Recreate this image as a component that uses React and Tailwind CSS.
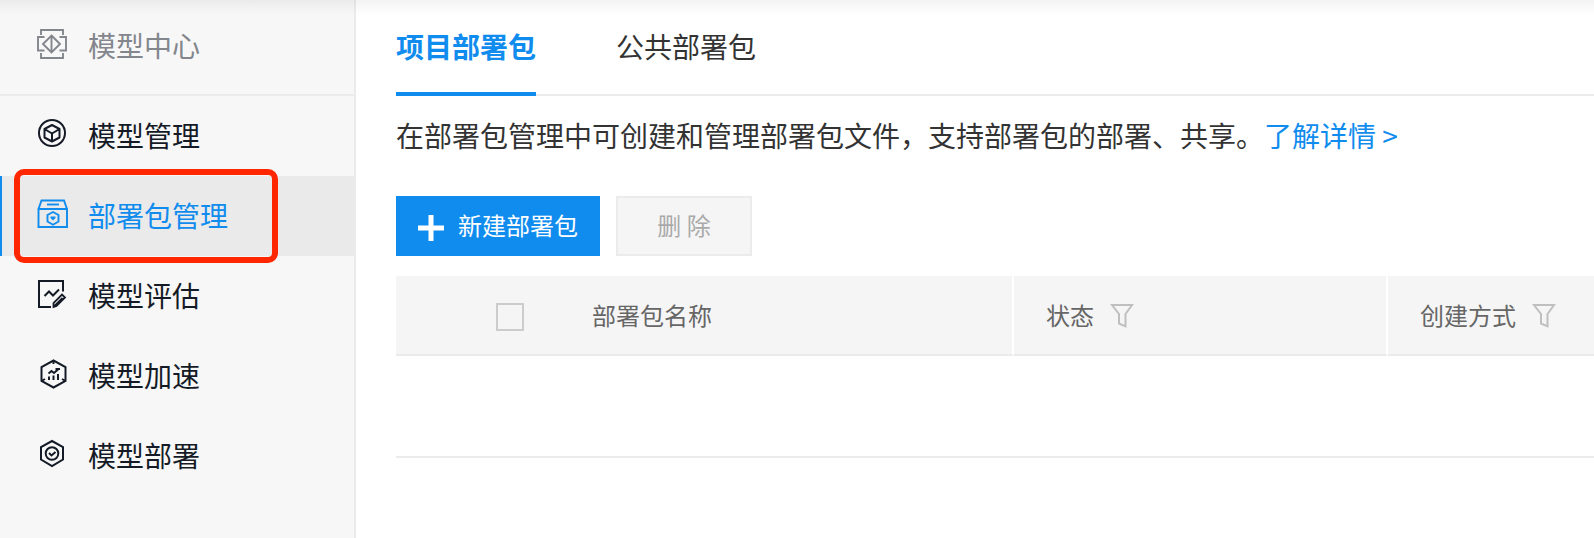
import { useState } from 'react';
import { clsx } from 'clsx';

const Icon = ({ children }) => (
    <svg
        className="w-8 h-8 mb-1 shrink-0"
        viewBox="0 0 32 32"
        fill="none"
        stroke="currentColor"
        strokeWidth="2"
        aria-hidden="true"
    >
        {children}
    </svg>
);

const CenterIcon = () => (
    <Icon>
        <g strokeWidth="1.9">
            <path d="M5 8V3h22v5M5 26v5h22v-5" />
            <path d="M8.500 10H2v13.500h6.500M23.500 10H30v13.500h-6.500" />
            <path d="M15.500 8.500l8.500 8.500-8.500 8.500L7 17zM15.500 8.500v17" />
        </g>
    </Icon>
);

const ManageIcon = () => (
    <Icon>
        <circle cx="16" cy="16" r="13" />
        <path d="M16 8l7.500 4v8.500L16 24.500l-7.500-4V12zM8.500 12l7.500 4.500 7.500-4.500M16 16.500v8" strokeLinejoin="round" />
    </Icon>
);

const PackageIcon = () => (
    <Icon>
        <g strokeWidth="1.9">
            <path d="M2.500 12h28.500v18H2.500zM2.500 12l3-8.500h22.500l3 8.500" />
            <path d="M11 7.500h12" />
            <path d="M17 15l5.500 3v6.500L17 27.700l-5.500-3.200V18z" />
        </g>
        <path d="M14.500 19.500h5v1.500L17 23.500l-2.500-2.500z" fill="currentColor" stroke="none" />
    </Icon>
);

const EvaluateIcon = () => (
    <Icon>
        <path d="M27 14.500V4H3v26h12" />
        <path d="M8.500 19l4.500-4.500 4 4 6-6" />
        <path d="M17.500 30v-4l8.500-8.500 3 3-8.500 8.500zM18.500 29l8-8" strokeWidth="1.800" />
    </Icon>
);

const SpeedIcon = () => (
    <Icon>
        <path d="M17.500 3.500l12 6.500v14l-12 6.500-12-6.500V10z" strokeWidth="2" />
        <path d="M17.500 3v4M5.500 24l3.500-2M29.500 24l-3.500-2" />
        <path d="M12.500 16.500l3-2.500 2.500 2 4.500-4M19.500 12H24" />
        <path d="M13 19.500v3.500M17.500 18.500v4.500M22 17v6" />
    </Icon>
);

const DeployIcon = () => (
    <Icon>
        <path d="M16 4l11 6v12.500l-11 6.500-11-6.500V10z" />
        <circle cx="16" cy="16.500" r="6.300" />
        <path d="M13 16l2.500 2.500 4-3.500" />
    </Icon>
);

const FilterIcon = () => (
    <svg className="w-6 h-6 mt-0.5" viewBox="0 0 24 24" fill="none" stroke="currentColor" strokeWidth="2" aria-hidden="true">
        <path d="M2 1h20l-6.500 9v12.300L9 19.500V10z" />
    </svg>
);

const navItems = [
    { id: 'manage', label: '模型管理', icon: <ManageIcon /> },
    { id: 'package', label: '部署包管理', icon: <PackageIcon />, marked: true },
    { id: 'evaluate', label: '模型评估', icon: <EvaluateIcon /> },
    { id: 'speed', label: '模型加速', icon: <SpeedIcon /> },
    { id: 'deploy', label: '模型部署', icon: <DeployIcon /> },
];

const tabs = [
    { id: 'project', label: '项目部署包' },
    { id: 'public', label: '公共部署包' },
];

const Sidebar = () => {
    const [current, setCurrent] = useState('package');

    return (
        <aside className="w-[356px] shrink-0 bg-[#f7f7f7] border-r-2 border-[#ebebeb]">
            <div className="h-24 pl-9 pb-1 flex items-center gap-5 text-[#83868c] border-b-2 border-[#ebebeb]">
                <CenterIcon />
                <span>模型中心</span>
            </div>
            <nav>
                {navItems.map((item) => (
                    <div key={item.id} className="relative">
                        <button
                            onClick={() => setCurrent(item.id)}
                            className={clsx(
                                'w-full h-20 pl-[34px] pb-0.5 flex items-center gap-5 text-left border-l-2',
                                current === item.id
                                    ? 'bg-[#eaeaea] text-[#108cee] border-[#108cee]'
                                    : 'text-[#151b26] border-transparent'
                            )}
                        >
                            {item.icon}
                            <span>{item.label}</span>
                        </button>
                        {item.marked && (
                            <div className="absolute left-3.5 -top-[7px] w-[264px] h-[94px] rounded-[10px] border-6 border-[#ff2600] pointer-events-none" />
                        )}
                    </div>
                ))}
            </nav>
        </aside>
    );
};

const PackageTable = () => (
    <table className="w-full mt-5 table-fixed border-separate border-spacing-0 text-2xl text-[#666] text-left">
        <thead>
            <tr className="h-20 bg-[#f5f5f5]">
                <th className="w-[164px] pl-[100px] border-b-2 border-[#ebebeb]">
                    <input
                        type="checkbox"
                        aria-label="全选"
                        className="block mt-1 appearance-none w-7 h-7 border-2 border-[#ccc] checked:bg-[#108cee]"
                    />
                </th>
                <th className="w-[454px] pl-8 font-normal border-b-2 border-r-2 border-b-[#ebebeb] border-r-white">
                    部署包名称
                </th>
                <th className="w-[374px] pl-8 font-normal border-b-2 border-r-2 border-b-[#ebebeb] border-r-white">
                    <div className="flex items-center gap-4">
                        状态
                        <button aria-label="筛选状态" className="text-[#bfbfbf]"><FilterIcon /></button>
                    </div>
                </th>
                <th className="pl-8 font-normal border-b-2 border-b-[#ebebeb]">
                    <div className="flex items-center gap-4">
                        创建方式
                        <button aria-label="筛选创建方式" className="text-[#bfbfbf]"><FilterIcon /></button>
                    </div>
                </th>
            </tr>
        </thead>
        <tbody>
            <tr className="h-[102px]">
                <td colSpan={4} className="border-b-2 border-[#ebebeb]" />
            </tr>
        </tbody>
    </table>
);

const App = () => {
    const [tab, setTab] = useState('project');

    return (
        <div className="relative min-h-screen flex overflow-hidden bg-white text-[28px] leading-10 font-['Noto_Sans_CJK_SC',sans-serif]">
            <div className="absolute inset-x-0 top-0 h-4 bg-linear-to-b from-black/5 via-black/2 to-transparent pointer-events-none" />
            <Sidebar />
            <main className="flex-1 min-w-0 pl-10 text-[#333]">
                <div className="h-24 flex gap-20 border-b-2 border-[#ebebeb]">
                    {tabs.map((t) => (
                        <button
                            key={t.id}
                            onClick={() => setTab(t.id)}
                            className={clsx(
                                'h-24 border-b-4',
                                tab === t.id ? 'font-bold text-[#108cee] border-[#108cee]' : 'border-transparent'
                            )}
                        >
                            {t.label}
                        </button>
                    ))}
                </div>
                <p className="pt-[19px] pb-[21px]">
                    在部署包管理中可创建和管理部署包文件，支持部署包的部署、共享。
                    <a href="#" className="text-[#108cee]">了解详情 &gt;</a>
                </p>
                <div className="mt-5 flex gap-4 text-2xl">
                    <button className="h-15 px-[22px] pb-0.5 flex items-center gap-3.5 bg-[#108cee] text-white">
                        <svg className="w-[26px] h-[26px] mt-1.5" viewBox="0 0 26 26" stroke="currentColor" strokeWidth="5" aria-hidden="true">
                            <path d="M13 0v26M0 13h26" />
                        </svg>
                        新建部署包
                    </button>
                    <button className="h-15 w-[136px] pb-0.5 bg-[#f5f5f5] border-2 border-[#ebebeb] text-[#aaa]">删 除</button>
                </div>
                <PackageTable />
            </main>
        </div>
    );
};

export default App;
